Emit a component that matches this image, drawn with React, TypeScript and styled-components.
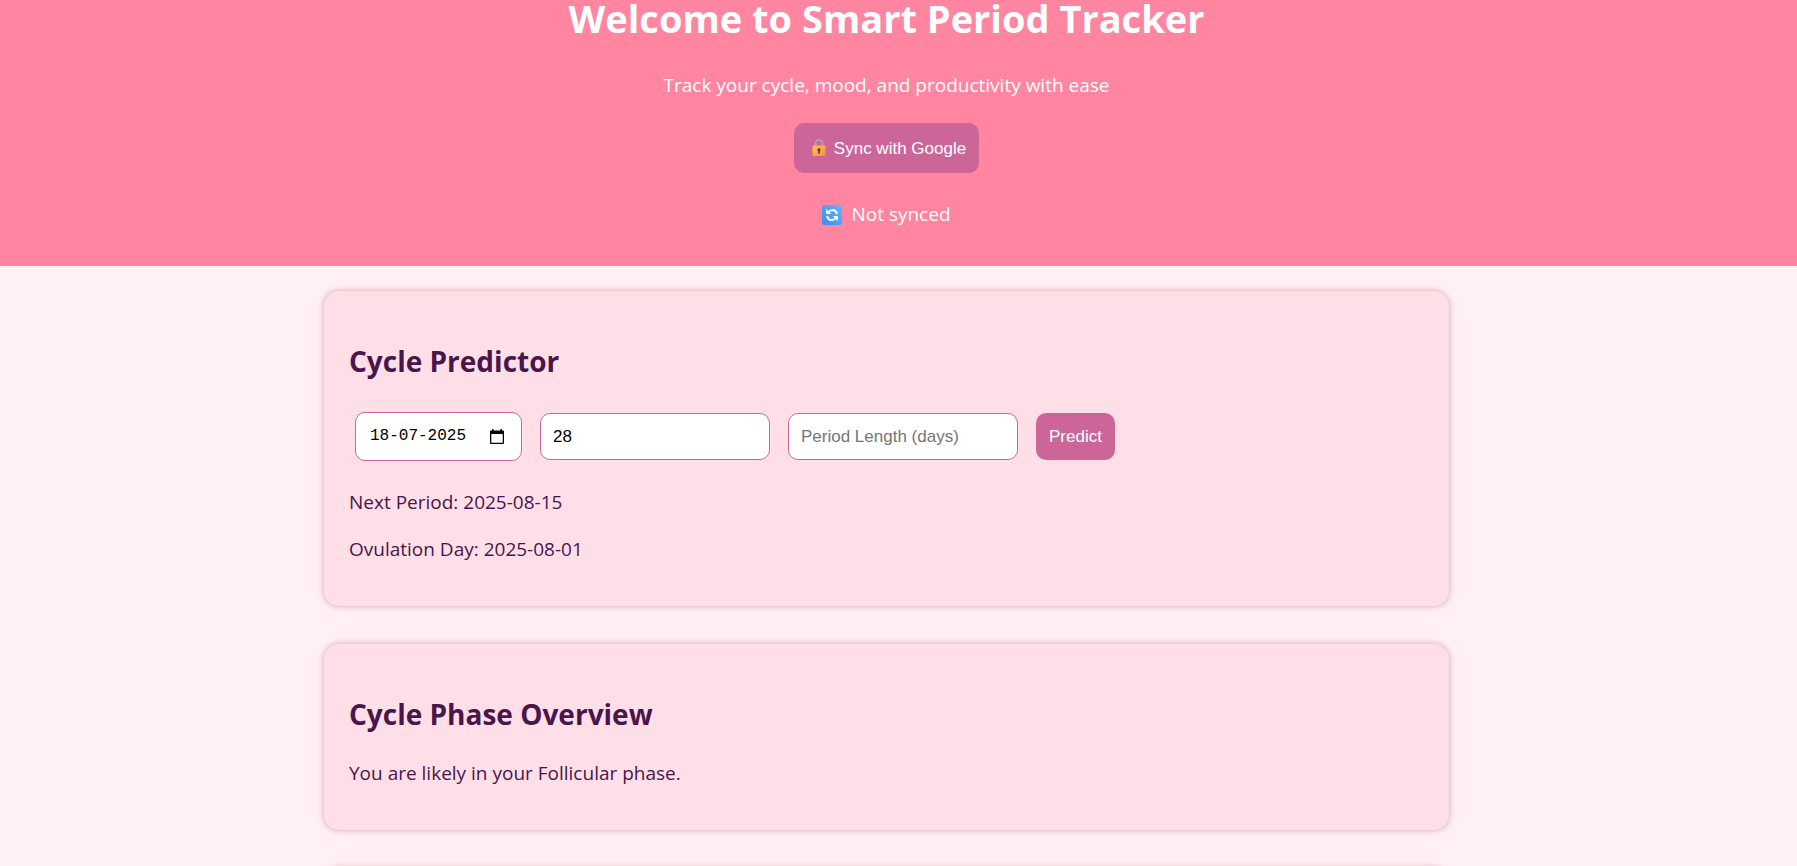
import React, { useState } from "react";
import styled, { createGlobalStyle } from "styled-components";

const GlobalStyle = createGlobalStyle`
  *, *::before, *::after { box-sizing: border-box; }
  body {
    margin: 0;
    background: #fff0f5;
    color: #4a154b;
    font-family: "Segoe UI", "Open Sans", "Noto Sans", sans-serif;
    font-size: 19px;
    line-height: 27px;
  }
`;

const Page = styled.div`
  height: 100vh;
  overflow: hidden;
`;

const Hero = styled.header`
  display: flex;
  flex-direction: column;
  align-items: center;
  padding: 0 24px 38px 0;
  background: #ff85a1;
  color: #fff;
  text-align: center;
`;

const HeroTitle = styled.h1`
  margin: 0;
  font-size: 38px;
  line-height: 36px;
`;

const Tagline = styled.p`
  margin: 36px 0 24px;
`;

const Button = styled.button`
  display: flex;
  align-items: center;
  gap: 8px;
  padding: 14px 13px;
  border: 0;
  border-radius: 10px;
  background: #cc6699;
  color: #fff;
  font: 17px/19px "Liberation Sans", Arial, sans-serif;
  cursor: pointer;
`;

const SyncButton = styled(Button)`
  height: 50px;
  padding: 0 13px 0 18px;
`;

const SyncStatus = styled.p`
  display: flex;
  align-items: center;
  gap: 9px;
  margin: 28px 0 0;
`;

const Main = styled.main`
  display: flex;
  flex-direction: column;
  align-items: center;
  gap: 38px;
  padding: 25px 24px 0 0;
`;

const Card = styled.section`
  width: 100%;
  max-width: 1125px;
  padding: 48px 25px 43px;
  border-radius: 15px;
  background: #ffdfe7;
  box-shadow: 0 0 6px rgba(140, 50, 50, 0.4);
`;

const CardTitle = styled.h2`
  margin: 0;
  font-size: 28px;
  line-height: 44px;
`;

const Form = styled.form`
  display: flex;
  align-items: center;
  gap: 18px;
  padding: 29px 6px 4px;
`;

const Field = styled.input`
  width: 230px;
  height: 47px;
  padding: 0 12px;
  border: 1px solid #cc6699;
  border-radius: 10px;
  background: #fff;
  color: #000;
  font: 17px/19px "Liberation Sans", Arial, sans-serif;
  &::placeholder { color: #757575; opacity: 1; }
`;

const DateField = styled.div`
  display: flex;
  align-items: center;
  width: 167px;
  height: 49px;
  padding: 0 17px 0 14px;
  border: 1px solid #cc6699;
  border-radius: 10px;
  background: #fff;
`;

const DateInput = styled.input`
  flex: 1;
  min-width: 0;
  padding: 0;
  border: 0;
  background: none;
  color: #000;
  font: 16px/19px Consolas, "Liberation Mono", monospace;
`;

const PickerButton = styled.button`
  display: flex;
  padding: 0;
  border: 0;
  background: none;
  color: #000;
`;

const Results = styled.div`
  display: flex;
  flex-direction: column;
  gap: 20px;
  padding-top: 24px;
`;

const Result = styled.p`
  margin: 0;
`;

const LockIcon = () => (
  <svg width="14" height="18" viewBox="0 0 14 18" aria-hidden="true">
    <defs>
      <linearGradient id="lockBody" x1="0" y1="0" x2="1" y2="1">
        <stop offset="0" stopColor="#ffc83d" />
        <stop offset="1" stopColor="#ff8a4c" />
      </linearGradient>
    </defs>
    <path d="M3.6 7V4.4a3.4 3.4 0 0 1 6.8 0V7" fill="none" stroke="#b9a3b8" strokeWidth="1.6" />
    <rect x="0.5" y="6.5" width="13" height="10.5" rx="1" fill="url(#lockBody)" />
    <path d="M7 9.2a1.5 1.5 0 0 1 .8 2.8v2.4H6.2V12A1.5 1.5 0 0 1 7 9.2z" fill="#433b5c" />
  </svg>
);

const SyncIcon = () => (
  <svg width="20" height="20" viewBox="0 0 20 20" aria-hidden="true">
    <defs>
      <linearGradient id="syncTile" x1="1" y1="0" x2="0" y2="1">
        <stop offset="0" stopColor="#62b5ff" />
        <stop offset="1" stopColor="#3f8ce8" />
      </linearGradient>
    </defs>
    <rect width="20" height="20" rx="2" fill="url(#syncTile)" />
    <path
      d="M6 7.2Q8 5 11 5Q14.4 5.4 14.8 9.2M14 12.8Q12 15 9 15Q5.6 14.6 5.2 10.8"
      fill="none"
      stroke="#fff"
      strokeWidth="2"
    />
    <path d="M4.2 4v5h5zM15.8 16v-5h-5z" fill="#fff" />
  </svg>
);

const CalendarIcon = () => (
  <svg width="14" height="16" viewBox="0 0 14 16" aria-hidden="true">
    <path d="M2 0h1.5v1.5h7V0H12v1.5h1q1 0 1 1V14q0 1-1 1H1q-1 0-1-1V2.5q0-1 1-1h1zM1.3 5v8.7h11.4V5z" fill="currentColor" fillRule="evenodd" />
  </svg>
);

export default function App() {
  const [start, setStart] = useState("18-07-2025");
  const [cycle, setCycle] = useState("28");
  const [length, setLength] = useState("");

  return (
    <Page>
      <GlobalStyle />
      <Hero>
        <HeroTitle>Welcome to Smart Period Tracker</HeroTitle>
        <Tagline>Track your cycle, mood, and productivity with ease</Tagline>
        <SyncButton type="button"><LockIcon />Sync with Google</SyncButton>
        <SyncStatus><SyncIcon />Not synced</SyncStatus>
      </Hero>
      <Main>
        <Card>
          <CardTitle>Cycle Predictor</CardTitle>
          <Form onSubmit={(e) => e.preventDefault()}>
            <DateField>
              <DateInput aria-label="Last period start" value={start} onChange={(e) => setStart(e.target.value)} />
              <PickerButton type="button" aria-label="Open calendar"><CalendarIcon /></PickerButton>
            </DateField>
            <Field type="text" inputMode="numeric" aria-label="Cycle length (days)" value={cycle} onChange={(e) => setCycle(e.target.value)} />
            <Field type="text" inputMode="numeric" aria-label="Period length (days)" placeholder="Period Length (days)" value={length} onChange={(e) => setLength(e.target.value)} />
            <Button type="submit">Predict</Button>
          </Form>
          <Results>
            <Result>Next Period: 2025-08-15</Result>
            <Result>Ovulation Day: 2025-08-01</Result>
          </Results>
        </Card>
        <Card>
          <CardTitle>Cycle Phase Overview</CardTitle>
          <Results>
            <Result>You are likely in your Follicular phase.</Result>
          </Results>
        </Card>
        <Card />
      </Main>
    </Page>
  );
}
